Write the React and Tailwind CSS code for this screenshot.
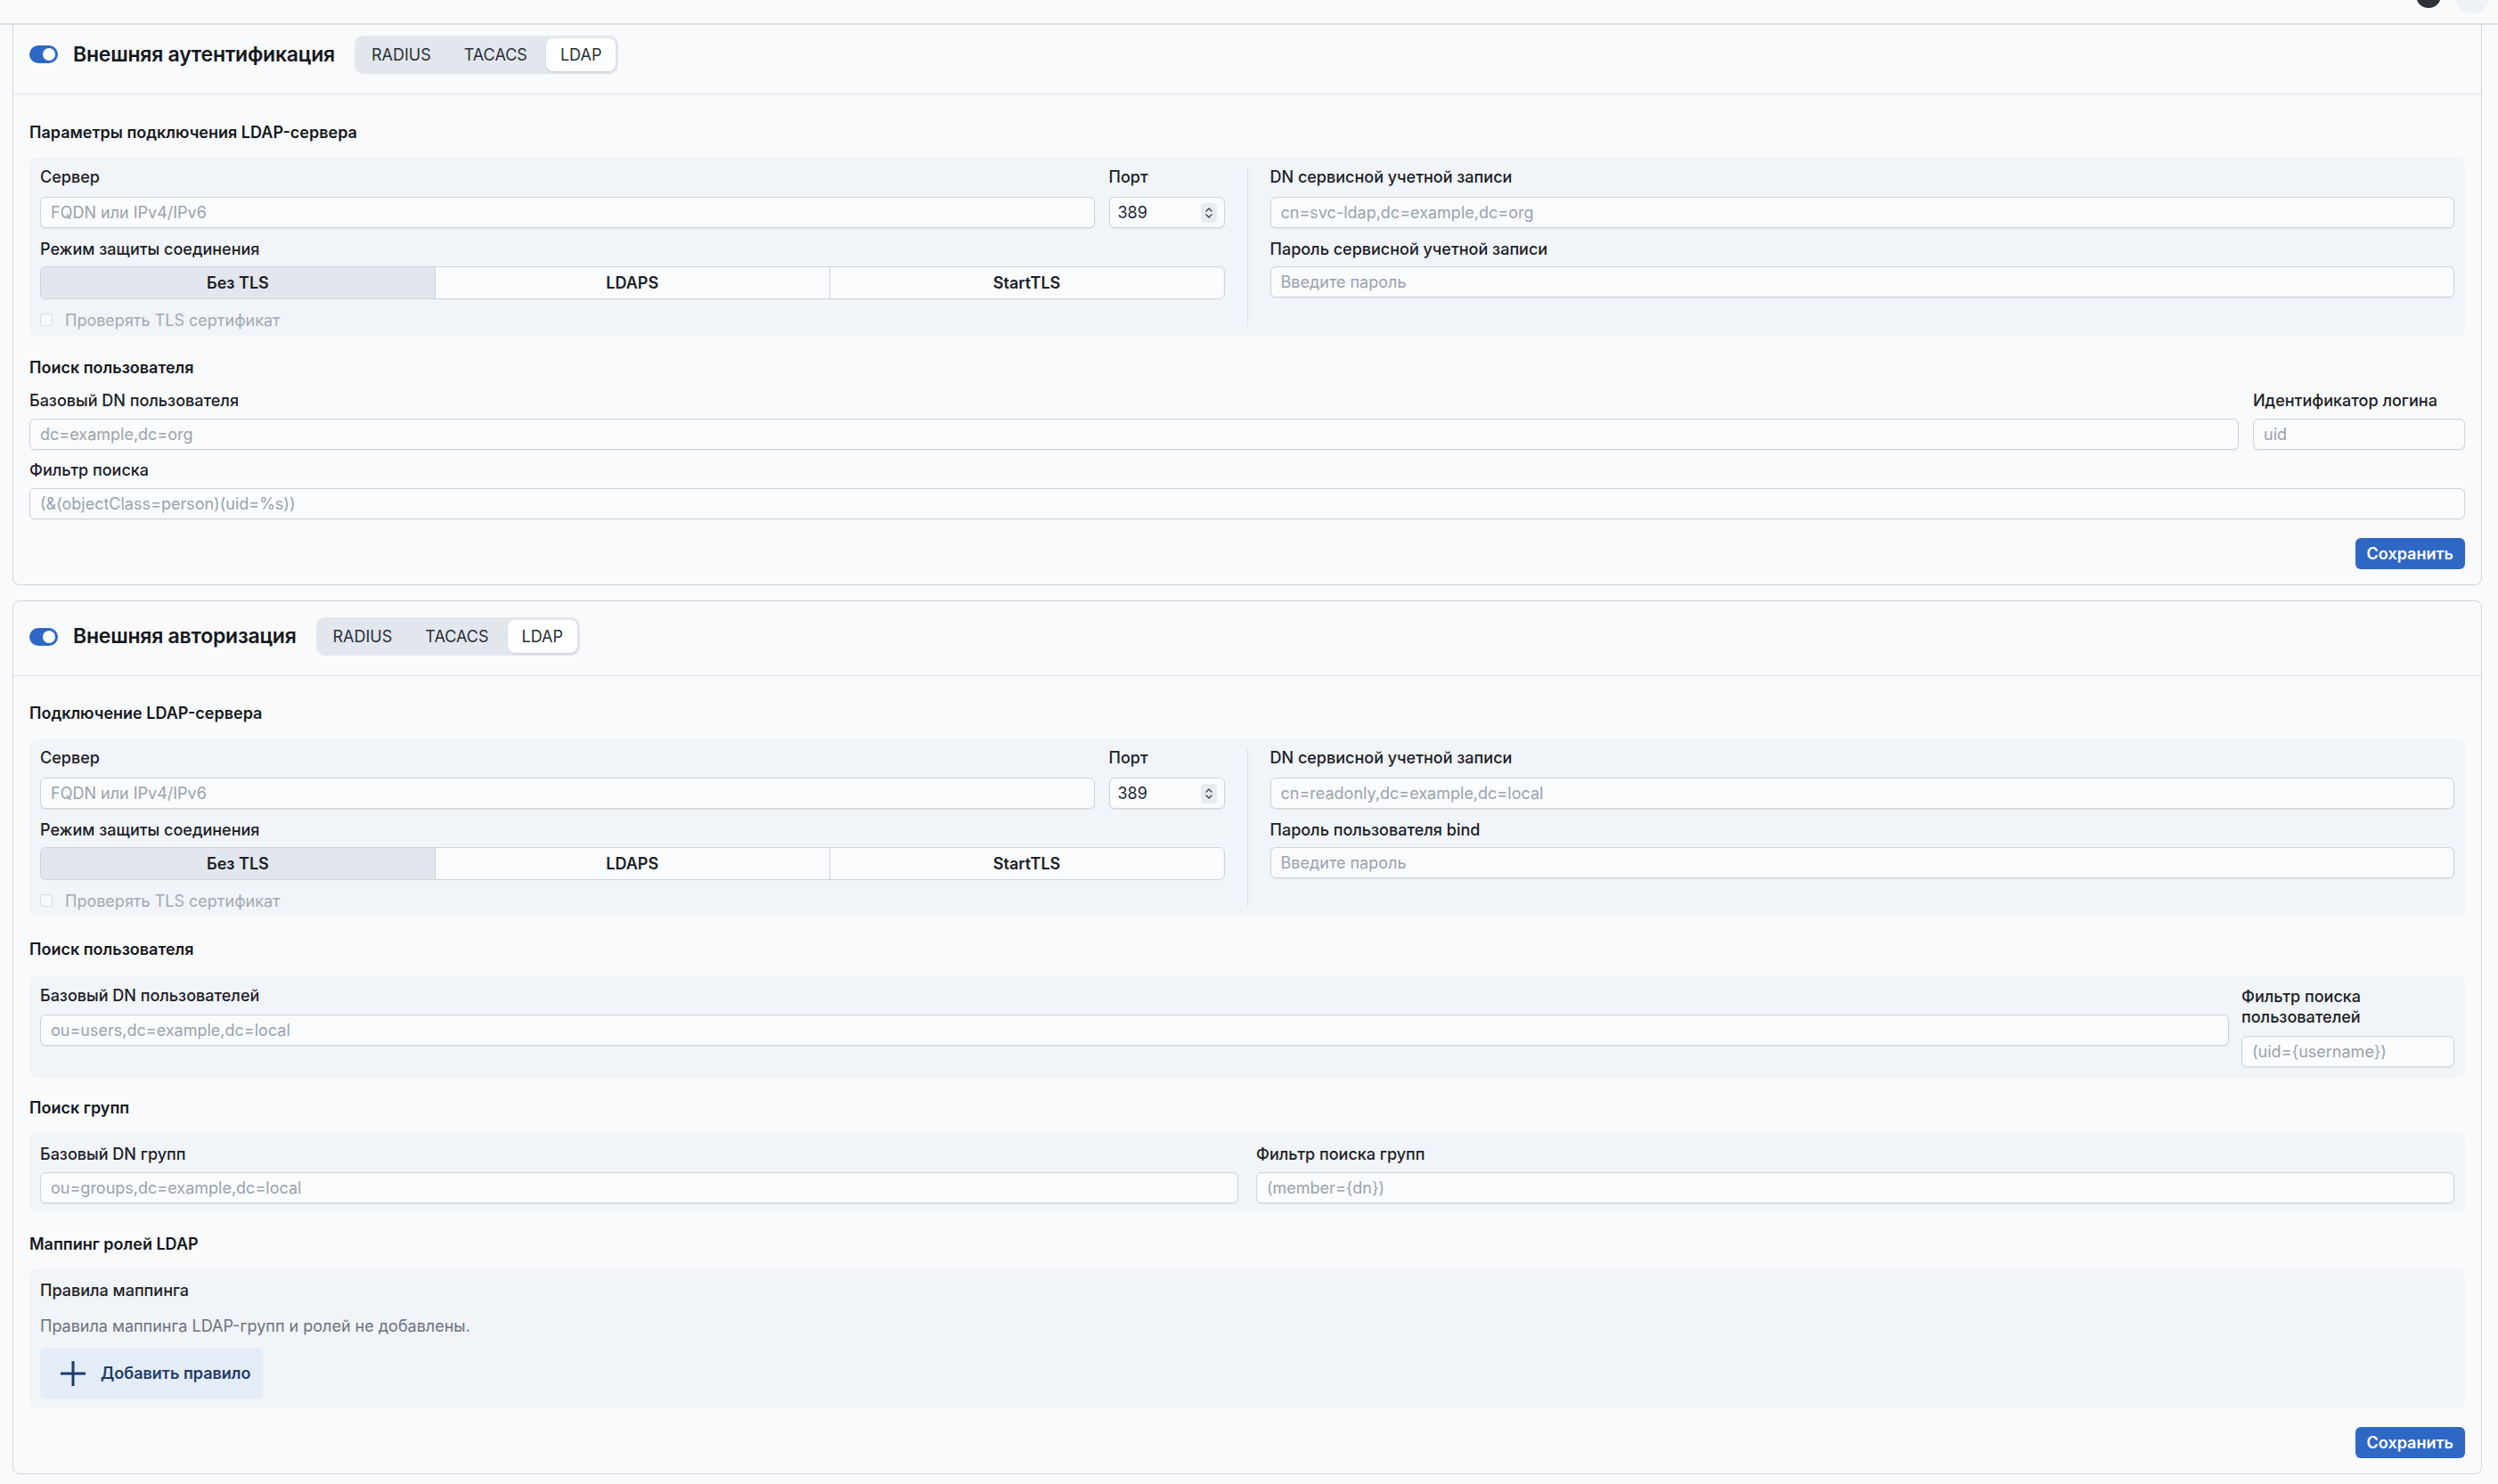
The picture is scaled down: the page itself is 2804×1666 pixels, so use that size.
const tabs = ["RADIUS", "TACACS", "LDAP"];
const tlsModes = ["Без TLS", "LDAPS", "StartTLS"];

const Label = ({ children, className = "" }) => (
  <label className={`block text-[18px] leading-[22px] font-medium text-[#1c2026] ${className}`}>
    {children}
  </label>
);

const SectionTitle = ({ children, className = "" }) => (
  <h3 className={`text-[18px] leading-[22px] font-semibold text-[#15181d] ${className}`}>{children}</h3>
);

const TextInput = ({ placeholder, className = "" }) => (
  <input
    placeholder={placeholder}
    className={`block h-[35px] w-full rounded-[6px] border border-[#cbd3de] bg-[#f9fbfd] px-[11px] text-[18px] text-[#1f2937] shadow-[0_1px_1px_rgba(15,23,42,0.06)] outline-none placeholder:text-[#9aa2ad] ${className}`}
  />
);

const PortInput = () => (
  <div className="flex h-[35px] items-center justify-between rounded-[6px] border border-[#cbd3de] bg-[#f9fbfd] pl-[9px] pr-[8px] shadow-[0_1px_1px_rgba(15,23,42,0.06)]">
    <span className="text-[18px] text-[#1f2937]">389</span>
    <span className="flex h-[22px] w-[18px] items-center justify-center rounded-[4px] bg-[#e8ecf1]">
      <svg width="10" height="16" viewBox="0 0 10 16" fill="none" stroke="#3b4048" strokeWidth="1.4" strokeLinecap="round" strokeLinejoin="round">
        <path d="M2 6l3-3 3 3" />
        <path d="M2 10l3 3 3-3" />
      </svg>
    </span>
  </div>
);

const Toggle = () => (
  <div className="relative h-[20px] w-[32px] shrink-0 rounded-full bg-[#2f68c4]">
    <span className="absolute right-[3px] top-[3px] h-[14px] w-[14px] rounded-full bg-white" />
  </div>
);

const ProtocolTabs = () => (
  <div className="ml-[22px] flex h-[43px] items-stretch gap-[5px] rounded-[10px] bg-[#e2e7ee] p-[3px]">
    {tabs.map((tab) => (
      <button
        key={tab}
        className={
          tab === "LDAP"
            ? "rounded-[8px] bg-white px-[16px] text-[18px] text-[#2a2f36] shadow-[0_1px_2px_rgba(15,23,42,0.12)]"
            : "rounded-[8px] px-[16px] text-[18px] text-[#2a2f36]"
        }
      >
        {tab}
      </button>
    ))}
  </div>
);

const CardHeader = ({ title, className }) => (
  <div className={`flex items-center border-b border-[#dfe4ea] px-[18px] ${className}`}>
    <Toggle />
    <h2 className="ml-[17px] text-[23px] font-semibold tracking-[-0.01em] text-[#15181d]">{title}</h2>
    <ProtocolTabs />
  </div>
);

const SaveButton = () => (
  <div className="mt-[21px] flex justify-end">
    <button className="h-[35px] rounded-[6px] bg-[#2f68c4] px-[13px] text-[18px] font-semibold text-white">
      Сохранить
    </button>
  </div>
);

const PlusIcon = () => (
  <svg width="30" height="30" viewBox="0 0 30 30" fill="none" stroke="#1f3b68" strokeWidth="3" strokeLinecap="butt">
    <path d="M15 1v28" />
    <path d="M1 15h28" />
  </svg>
);

const ServerPanel = ({ dnPlaceholder, passwordLabel }) => (
  <div className="flex rounded-[8px] bg-[#f1f4f8] px-3 pt-[11px] pb-[8px]">
    <div className="flex-1">
      <div className="flex gap-4">
        <div className="flex-1">
          <Label className="mb-[11px]">Сервер</Label>
          <TextInput placeholder="FQDN или IPv4/IPv6" />
        </div>
        <div className="w-[130px]">
          <Label className="mb-[11px]">Порт</Label>
          <PortInput />
        </div>
      </div>
      <Label className="mt-[13px] mb-[8px]">Режим защиты соединения</Label>
      <div className="flex h-[37px] overflow-hidden rounded-[6px] border border-[#cbd3de]">
        {tlsModes.map((mode, i) => (
          <div
            key={mode}
            className={
              i === 0
                ? "flex flex-1 items-center justify-center bg-[#e2e7ee] text-[18px] font-semibold text-[#1c2026]"
                : "flex flex-1 items-center justify-center border-l border-[#cbd3de] bg-[#fafbfd] text-[18px] font-semibold text-[#1c2026]"
            }
          >
            {mode}
          </div>
        ))}
      </div>
      <div className="mt-[13px] flex h-[20px] items-center gap-[14px]">
        <span className="h-[14px] w-[14px] rounded-[3px] border border-[#d6dbe2] bg-[#f7f9fb]" />
        <span className="text-[18px] text-[#a3a9b3]">Проверять TLS сертификат</span>
      </div>
    </div>
    <div className="mx-[25px] mt-[1px] mb-[3px] w-px bg-[#dde2e8]" />
    <div className="flex-1">
      <Label className="mb-[11px]">DN сервисной учетной записи</Label>
      <TextInput placeholder={dnPlaceholder} />
      <Label className="mt-[13px] mb-[8px]">{passwordLabel}</Label>
      <TextInput placeholder="Введите пароль" />
    </div>
  </div>
);

const AuthenticationCard = () => (
  <section className="rounded-b-[8px] border-x border-b border-[#cfd6df] bg-[#f9fafc]">
    <CardHeader title="Внешняя аутентификация" className="h-[78px] pb-[11px]" />
    <div className="px-[18px] pt-[32px] pb-[17px]">
      <SectionTitle className="mb-[17px]">Параметры подключения LDAP-сервера</SectionTitle>
      <ServerPanel dnPlaceholder="cn=svc-ldap,dc=example,dc=org" passwordLabel="Пароль сервисной учетной записи" />

      <SectionTitle className="mt-[25px]">Поиск пользователя</SectionTitle>
      <div className="mt-[15px] flex gap-4">
        <div className="flex-1">
          <Label className="mb-[9px]">Базовый DN пользователя</Label>
          <TextInput placeholder="dc=example,dc=org" />
        </div>
        <div className="w-[238px]">
          <Label className="mb-[9px]">Идентификатор логина</Label>
          <TextInput placeholder="uid" />
        </div>
      </div>
      <Label className="mt-[12px] mb-[9px]">Фильтр поиска</Label>
      <TextInput placeholder="(&(objectClass=person)(uid=%s))" />
      <SaveButton />
    </div>
  </section>
);

const AuthorizationCard = () => (
  <section className="mt-[17px] rounded-[8px] border border-[#cfd6df] bg-[#f9fafc]">
    <CardHeader title="Внешняя авторизация" className="h-[84px] pb-[4px]" />
    <div className="px-[18px] pt-[31px] pb-[17px]">
      <SectionTitle className="mb-[17px]">Подключение LDAP-сервера</SectionTitle>
      <ServerPanel dnPlaceholder="cn=readonly,dc=example,dc=local" passwordLabel="Пароль пользователя bind" />

      <SectionTitle className="mt-[26px] mb-[18px]">Поиск пользователя</SectionTitle>
      <div className="flex items-start gap-[14px] rounded-[8px] bg-[#f1f4f8] px-3 py-3">
        <div className="flex-1">
          <Label className="mb-[10px]">Базовый DN пользователей</Label>
          <TextInput placeholder="ou=users,dc=example,dc=local" />
        </div>
        <div className="w-[239px]">
          <Label className="mb-[10px] leading-[23px]">Фильтр поиска пользователей</Label>
          <TextInput placeholder="(uid={username})" />
        </div>
      </div>

      <SectionTitle className="mt-[23px] mb-[17px]">Поиск групп</SectionTitle>
      <div className="grid grid-cols-2 gap-[20px] rounded-[8px] bg-[#f1f4f8] px-3 pt-[13px] pb-[11px]">
        <div>
          <Label className="mb-[9px]">Базовый DN групп</Label>
          <TextInput placeholder="ou=groups,dc=example,dc=local" />
        </div>
        <div>
          <Label className="mb-[9px]">Фильтр поиска групп</Label>
          <TextInput placeholder="(member={dn})" />
        </div>
      </div>

      <SectionTitle className="mt-[24px] mb-[17px]">Маппинг ролей LDAP</SectionTitle>
      <div className="rounded-[8px] bg-[#f1f4f8] px-3 pt-[13px] pb-[11px]">
        <Label>Правила маппинга</Label>
        <p className="mt-[18px] text-[18px] leading-[22px] text-[#6b7280]">
          Правила маппинга LDAP-групп и ролей не добавлены.
        </p>
        <button className="mt-[13px] flex h-[57px] items-center gap-[16px] rounded-[6px] bg-[#e3ecf7] pl-[22px] pr-[13px] text-[18px] font-semibold text-[#1f3b68]">
          <PlusIcon />
          Добавить правило
        </button>
      </div>
      <SaveButton />
    </div>
  </section>
);

export default function App() {
  return (
    <div className="min-h-screen bg-[#f8fafc] font-['Inter',sans-serif] text-[#1c2026]">
      <div className="flex h-[28px] items-start justify-end overflow-hidden border-b-2 border-[#dcdfe4] pr-[9px]">
        <div className="-mt-[25px] flex items-center gap-[15px]">
          <span className="h-[28px] w-[28px] rounded-full bg-[#2d3138]" />
          <span className="h-[40px] w-[40px] rounded-full bg-[#eef1f5]" />
        </div>
      </div>
      <main className="pl-[14px] pr-[18px] pb-[12px]">
        <AuthenticationCard />
        <AuthorizationCard />
      </main>
    </div>
  );
}
